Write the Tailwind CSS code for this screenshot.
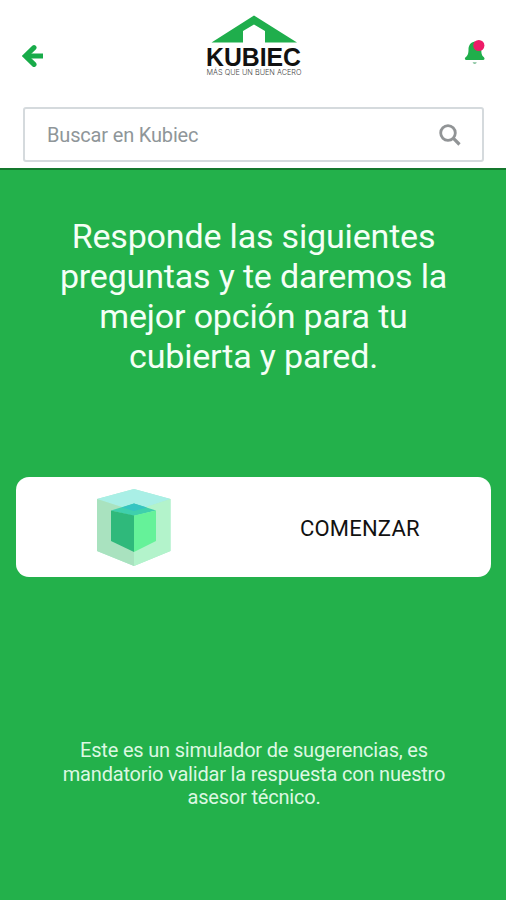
<!DOCTYPE html>
<html lang="es">
  <head>
    <meta charset="UTF-8" />
    <meta name="viewport" content="width=device-width, initial-scale=1.0" />
    <title>Kubiec</title>
    <script src="https://cdn.jsdelivr.net/npm/@tailwindcss/browser@4"></script>
  </head>
  <body class="flex h-screen flex-col overflow-hidden bg-[#23b14b] font-['Roboto',sans-serif]">

    <!-- Header -->
    <header class="h-[170px] shrink-0 border-b-2 border-[#14782d] bg-white">
      <div class="flex h-[107px] items-start justify-between pr-[20px] pl-[22px]">
        <button class="mt-[44px]" aria-label="Volver">
          <svg class="block" width="22" height="24" viewBox="0 0 22 24" fill="none" stroke="#18ab49" stroke-width="5">
            <path d="M12 3.600L3.400 12l8.600 8.400" stroke-linejoin="miter" stroke-linecap="round" />
            <path d="M5 12H21" />
          </svg>
        </button>

        <!-- Logo -->
        <svg class="mt-[10px] block" width="104" height="70" viewBox="0 0 104 70">
          <path d="M52 5.500L95 32.600H63V21L52 14.500 41 21V32.600H9.500Z" fill="#1fae4c" />
          <text x="4" y="56" font-family="Liberation Sans, sans-serif" font-weight="700" font-size="25" fill="#111" textLength="95" lengthAdjust="spacingAndGlyphs">KUBIEC</text>
          <text x="4.500" y="64.800" font-family="Inter, sans-serif" font-weight="300" font-size="7.200" fill="#444" textLength="95" lengthAdjust="spacingAndGlyphs">MÁS QUE UN BUEN ACERO</text>
        </svg>

        <button class="mt-[38px]" aria-label="Notificaciones">
          <svg class="block" width="22" height="28" viewBox="0 0 22 28">
            <path d="M10.800 3.500C6.500 4.200 4.500 7.500 4.500 11.500c0 4.500-1 6-3 7.800-1.200 1.200-.6 2.800.8 2.800h16.800c1.500 0 2-1.600.8-2.800-2-1.800-2.600-3.500-2.600-7.800C17.300 7 15 4 10.800 3.500Z" fill="#20ae4b" />
            <path d="M8.700 24.200h4c-.4 2.300-3.600 2.300-4 0Z" fill="#7fbf98" />
            <circle cx="14.800" cy="7.500" r="5.600" fill="#ee1b68" />
          </svg>
        </button>
      </div>

      <!-- Search -->
      <div class="mr-[22px] ml-[23px] flex h-[55px] items-center justify-between rounded-[3px] border-2 border-[#d5dadd] pr-[21px] pl-[22px]">
        <span class="text-[20px] tracking-[-0.17px] text-[#8f9699]">Buscar en Kubiec</span>
        <svg class="block" width="22" height="22" viewBox="0 0 22 22" fill="none" stroke="#919496">
          <circle cx="9" cy="9" r="7.300" stroke-width="2.800" />
          <path d="M14.200 14.200L20.500 20.500" stroke-width="3.200" />
        </svg>
      </div>
    </header>

    <!-- Content -->
    <main class="flex flex-col">
      <h1 class="mt-[46px] pl-px text-center text-[34px] leading-[40px] tracking-[-0.17px] text-[#f4fff6]">
        Responde las siguientes<br />preguntas y te daremos la<br />mejor opción para tu<br />cubierta y pared.
      </h1>

      <button class="mr-[15px] ml-[16px] mt-[101px] flex h-[100px] items-center rounded-[13px] bg-white">
        <svg class="ml-[80px] block" width="76" height="80" viewBox="0 0 76 80">
          <path d="M38 2L74.500 12V64L38 79 1 64V12Z" fill="#acebcf" />
          <path d="M38 2L74.500 12 38 24 1 12Z" fill="#a9efe6" />
          <path d="M1 12L38 24V79L1 64Z" fill="#a9e2bf" />
          <path d="M74.500 12L38 24V79L74.500 64Z" fill="#b3f3cb" />
          <path d="M38 16.500L60 23.500 38 29 15 23.500Z" fill="#3fd0ac" />
          <path d="M15 23.500L38 28.500V65L15 54Z" fill="#2fb97b" />
          <path d="M60 23.500L38 28.500V65L60 54Z" fill="#65f299" />
          <path d="M38 16.500L51 20.500 38 24 26 20.500Z" fill="#36c4c2" />
        </svg>
        <span class="mt-[3px] ml-[128px] text-[22px] tracking-[0.2px] text-[#111]">COMENZAR</span>
      </button>

      <p class="mt-[162px] pl-[2px] text-center text-[20px] leading-[23.5px] tracking-[-0.19px] text-[#dcf8e2]">
        Este es un simulador de sugerencias, es<br />mandatorio validar la respuesta con nuestro<br />asesor técnico.
      </p>
    </main>
  </body>
</html>
